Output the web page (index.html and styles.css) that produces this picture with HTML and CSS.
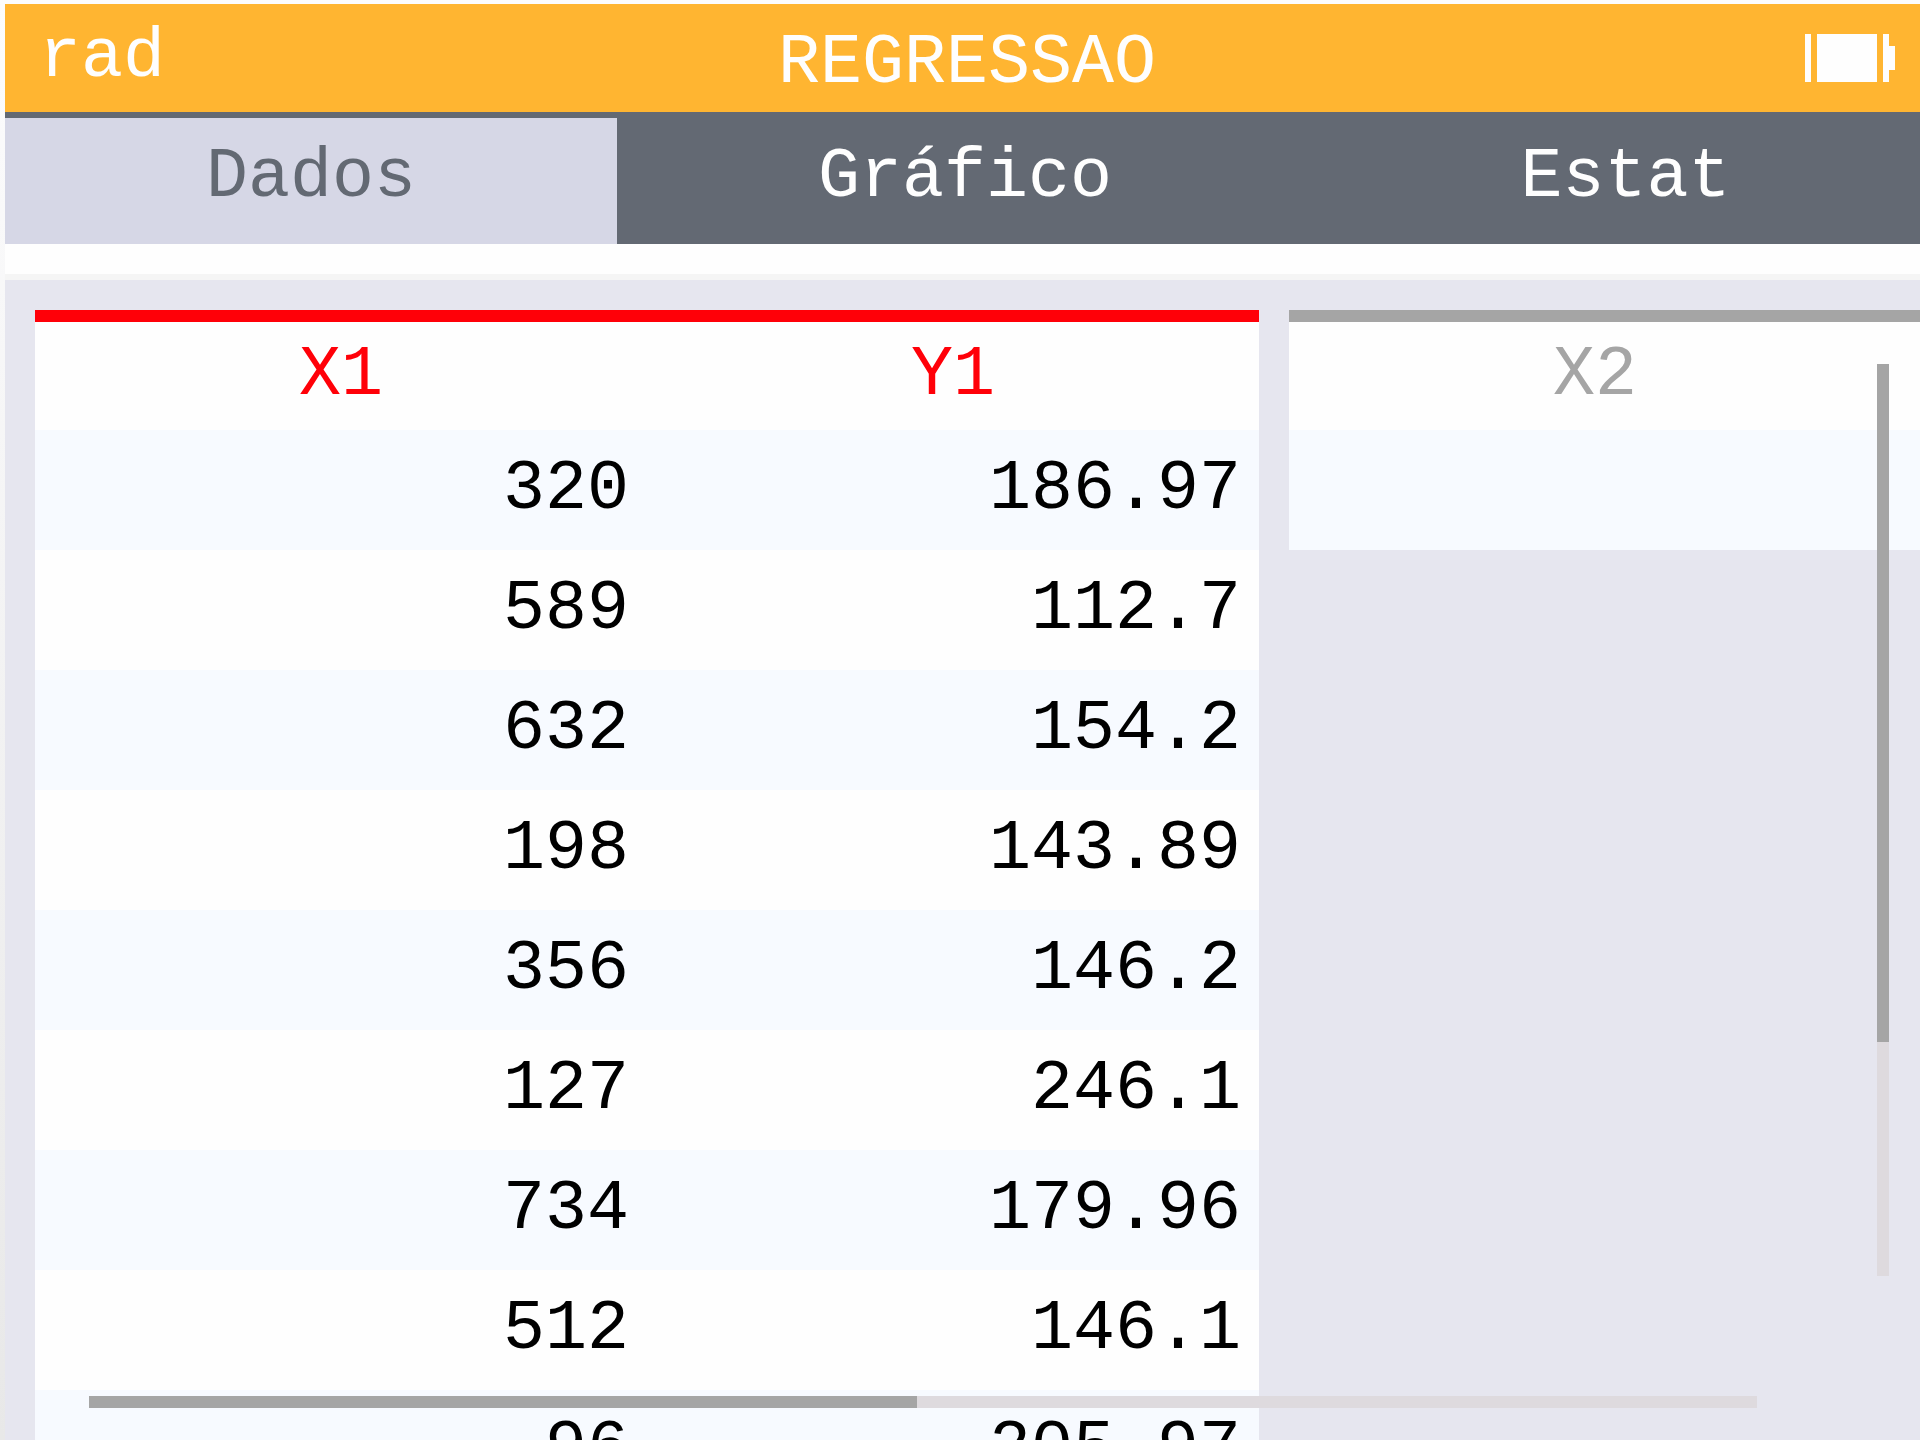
FILE: index.html
```html
<!DOCTYPE html>
<html lang="pt">
<head>
<meta charset="utf-8">
<meta name="viewport" content="width=device-width, initial-scale=1">
<title>Regressao</title>
<link rel="stylesheet" href="styles.css">
</head>
<body>
<div class="screen">
  <header class="title-bar">
    <span class="angle-unit">rad</span>
    <h1 class="title">REGRESSAO</h1>
    <svg class="battery" viewBox="0 0 15 8" shape-rendering="crispEdges" aria-hidden="true">
      <path d="M0 0h1v8H0zM2 0h10v8H2zM13 0h1v2h1v4h-1v2h-1z"/>
    </svg>
  </header>
  <nav class="tabs">
    <button class="tab tab-active" type="button">Dados</button>
    <button class="tab" type="button">Gráfico</button>
    <button class="tab tab-last" type="button">Estat</button>
  </nav>
  <div class="spacer"></div>
  <main class="store">
    <table class="series series-on">
      <thead><tr><th scope="col">X1</th><th scope="col">Y1</th></tr></thead>
      <tbody>
        <tr><td>320</td><td>186.97</td></tr>
        <tr><td>589</td><td>112.7</td></tr>
        <tr><td>632</td><td>154.2</td></tr>
        <tr><td>198</td><td>143.89</td></tr>
        <tr><td>356</td><td>146.2</td></tr>
        <tr><td>127</td><td>246.1</td></tr>
        <tr><td>734</td><td>179.96</td></tr>
        <tr><td>512</td><td>146.1</td></tr>
        <tr><td>96</td><td>205.97</td></tr>
      </tbody>
    </table>
    <table class="series series-off">
      <thead><tr><th scope="col">X2</th></tr></thead>
      <tbody><tr><td></td></tr></tbody>
    </table>
    <div class="scroll scroll-y"><div class="thumb"></div><div class="rest"></div></div>
    <div class="scroll scroll-x"><div class="thumb"></div><div class="rest"></div></div>
  </main>
</div>
</body>
</html>
```
FILE: styles.css
```css
:root {
  --orange: #ffb531;
  --slate: #636973;
  --tab: #d6d7e6;
  --wall: #e6e6ef;
  --paper: #fefefe;
  --stripe: #f7faff;
  --grey: #a5a5a5;
  --track: #dedade;
  --red: #ff0008;
}

* {
  box-sizing: border-box;
}

body {
  margin: 0;
  height: 100vh;
  overflow: hidden;
  padding: 4px 0 0 5px;
  background: linear-gradient(#fcfcfd, #e8e8e8);
  font: 70px/96px "Liberation Mono", monospace;
}

.screen {
  display: flex;
  flex-direction: column;
  height: 100%;
}

.title-bar {
  display: grid;
  grid-template-columns: 1fr auto 1fr;
  align-items: center;
  height: 108px;
  padding: 0 25px 0 34px;
  background: var(--orange);
  color: var(--paper);
}

.title {
  margin: 0;
  padding-top: 12px;
  font-size: inherit;
  font-weight: normal;
}

.battery {
  justify-self: end;
  width: 90px;
  height: 48px;
  fill: var(--paper);
}

.tabs {
  display: grid;
  grid-template-columns: 612fr 696fr 607fr;
  border-top: 6px solid var(--slate);
  background: var(--slate);
}

.tab {
  height: 126px;
  padding: 0 0 6px;
  border: 0;
  background: none;
  color: var(--paper);
  font: inherit;
}

.tab-active {
  background: var(--tab);
  color: var(--slate);
}

.tab-last {
  padding-left: 18px;
}

.spacer {
  height: 36px;
  border-bottom: 6px solid #f5f5f5;
  background: var(--paper);
}

.store {
  position: relative;
  display: grid;
  grid-template-columns: 1224fr 631fr;
  gap: 30px;
  align-items: start;
  flex: 1;
  min-height: 0;
  overflow: hidden;
  padding: 30px 0 0 30px;
  background: var(--wall);
}

.series {
  width: 100%;
  table-layout: fixed;
  border-spacing: 0;
  border-top: 12px solid currentColor;
  background: var(--paper);
}

.series-on {
  color: var(--red);
}

.series-off {
  color: var(--grey);
}

.series th {
  height: 108px;
  padding: 0;
  font-weight: normal;
}

.series-off th {
  padding-right: 19px;
}

.series td {
  height: 120px;
  padding: 0 18px 0 0;
  color: #000;
  text-align: right;
}

.series tbody tr:nth-child(odd) {
  background: var(--stripe);
}

.scroll {
  position: absolute;
  display: flex;
}

.scroll-y {
  flex-direction: column;
  top: 84px;
  right: 31px;
  bottom: 164px;
  width: 12px;
}

.scroll-x {
  right: 163px;
  bottom: 32px;
  left: 84px;
  height: 12px;
}

.thumb {
  background: var(--grey);
}

.rest {
  background: var(--track);
}

.scroll-y .thumb {
  flex: 113;
}

.scroll-y .rest {
  flex: 39;
}

.scroll-x .thumb {
  flex: 69;
}

.scroll-x .rest {
  flex: 70;
}
```
